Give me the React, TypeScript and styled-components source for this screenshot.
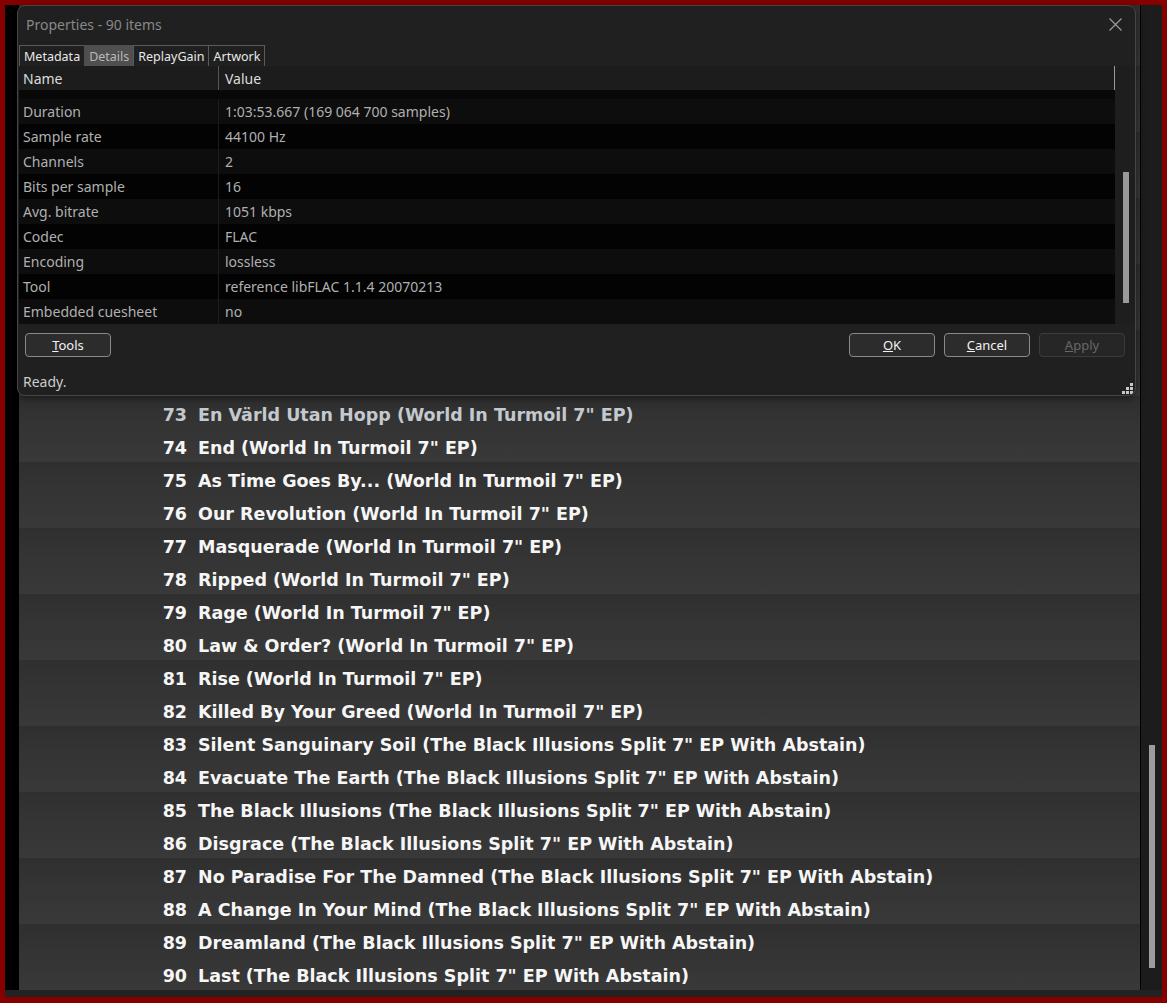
import React from "react";
import styled, { createGlobalStyle } from "styled-components";

const GlobalStyle = createGlobalStyle`
  html, body { margin: 0; padding: 0; height: 100%; overflow: hidden; background: #870000; }
  #root { height: 100%; }
  * { box-sizing: border-box; }
`;

const Frame = styled.div`
  position: relative;
  height: 100vh;
  padding: 5px 5px 6px 5px;
  background: #870000;
  display: flex;
`;

const Window = styled.div`
  flex: 1;
  display: flex;
  flex-direction: column;
  background: #1a1a1a;
  min-height: 0;
`;

const Body = styled.div`
  flex: 1;
  display: flex;
  min-height: 0;
`;

const LeftStrip = styled.div`
  width: 14px;
  background: #000;
`;

const TrackList = styled.div`
  flex: 1;
  display: flex;
  flex-direction: column;
  justify-content: flex-end;
  overflow: hidden;
  background: #303030;
`;

const TrackRow = styled.div<{ $alt: boolean; $dim?: boolean }>`
  flex: 0 0 33px;
  height: 33px;
  display: flex;
  align-items: center;
  padding-top: 5px;
  background: ${(p) =>
    p.$alt
      ? "linear-gradient(#343434, #393939)"
      : "linear-gradient(#2f2f2f, #353535)"};
  color: ${(p) => (p.$dim ? "#c4c9cf" : "#f6f6f6")};
  font-family: "DejaVu Sans", sans-serif;
  font-weight: bold;
  font-size: 17.5px;
  white-space: nowrap;
`;

const TrackNo = styled.span`
  width: 168px;
  text-align: right;
  flex: none;
`;

const TrackTitle = styled.span`
  margin-left: 11px;
`;

const MainScroll = styled.div`
  width: 22px;
  background: #1c1c1c;
  border-left: 1px solid #000;
  display: flex;
  flex-direction: column;
  justify-content: flex-end;
  padding: 0 0 22px 8px;
`;

const MainThumb = styled.div`
  width: 6px;
  height: 223px;
  background: #9c9c9c;
`;

const BottomStrip = styled.div`
  height: 7px;
  background: #222;
`;

/* ---------- Dialog ---------- */

const Dialog = styled.div`
  position: absolute;
  left: 17px;
  top: 5px;
  width: 1119px;
  height: 391px;
  border: 1px solid #454545;
  border-radius: 8px;
  background: #202020;
  display: flex;
  flex-direction: column;
  overflow: hidden;
  box-shadow: 0 2px 10px rgba(0, 0, 0, 0.5);
  font-family: "Noto Sans", "Open Sans", sans-serif;
`;

const TitleBar = styled.div`
  height: 39px;
  display: flex;
  align-items: center;
  padding: 0 0 3px 8px;
  flex: none;
`;

const Title = styled.div`
  flex: 1;
  color: #888888;
  font-size: 14px;
`;

const CloseButton = styled.div`
  width: 40px;
  height: 30px;
  display: flex;
  align-items: center;
  justify-content: center;
`;

const TabRow = styled.div`
  height: 21px;
  display: flex;
  padding-left: 1px;
  flex: none;
`;

const Tab = styled.div<{ $active?: boolean }>`
  height: 21px;
  padding: 0 4px;
  display: flex;
  align-items: center;
  font-size: 12.5px;
  border: 1px solid #5a5a5a;
  border-bottom: none;
  margin-right: -1px;
  background: ${(p) => (p.$active ? "#4f4f4f" : "#202020")};
  color: ${(p) => (p.$active ? "#b8b8b8" : "#e8e8e8")};
  border-color: ${(p) => (p.$active ? "#4f4f4f" : "#5a5a5a")};
`;

const ListArea = styled.div`
  height: 258px;
  margin-left: 1px;
  display: flex;
  flex: none;
`;

const ListMain = styled.div`
  flex: 1;
  display: flex;
  flex-direction: column;
  min-width: 0;
`;

const HeaderRow = styled.div`
  height: 24px;
  display: grid;
  grid-template-columns: 200px 1fr;
  background: #1c1c1c;
  border-right: 1px solid #9a9a9a;
  flex: none;
`;

const HeaderCell = styled.div<{ $first?: boolean }>`
  display: flex;
  align-items: center;
  padding-left: ${(p) => (p.$first ? "4px" : "6px")};
  color: #dcdcdc;
  font-size: 14px;
  border-right: ${(p) => (p.$first ? "1px solid #555" : "none")};
`;

const RowsArea = styled.div`
  flex: 1;
  display: flex;
  flex-direction: column;
  justify-content: flex-end;
  overflow: hidden;
  background: #080808;
`;

const PropRow = styled.div<{ $alt: boolean }>`
  height: 25px;
  flex: 0 0 25px;
  display: grid;
  grid-template-columns: 200px 1fr;
  background: ${(p) => (p.$alt ? "#030303" : "#0d0d0d")};
`;

const PropCell = styled.div<{ $first?: boolean }>`
  display: flex;
  align-items: center;
  padding-left: ${(p) => (p.$first ? "4px" : "6px")};
  color: #b0b0b0;
  font-size: 14px;
  white-space: nowrap;
  border-right: ${(p) => (p.$first ? "1px solid #1c1c1c" : "none")};
`;

const ListScroll = styled.div`
  width: 20px;
  background: #1e1e1e;
  padding: 106px 0 0 8px;
`;

const ListThumb = styled.div`
  width: 6px;
  height: 131px;
  background: #9a9a9a;
`;

const Footer = styled.div`
  flex: 1;
  display: flex;
  flex-direction: column;
`;

const ButtonRow = styled.div`
  display: flex;
  padding: 9px 10px 0 7px;
  gap: 9px;
`;

const Spacer = styled.div`
  flex: 1;
`;

const Button = styled.div<{ $disabled?: boolean }>`
  width: 86px;
  height: 24px;
  display: flex;
  align-items: center;
  justify-content: center;
  border-radius: 4px;
  font-size: 13px;
  border: 1px solid ${(p) => (p.$disabled ? "#3c3c3c" : "#8a8a8a")};
  background: ${(p) => (p.$disabled ? "#262626" : "#2c2c2c")};
  color: ${(p) => (p.$disabled ? "#686868" : "#f2f2f2")};
`;

const StatusRow = styled.div`
  flex: 1;
  display: flex;
  align-items: flex-end;
  justify-content: space-between;
  padding: 0 2px 1px 5px;
`;

const StatusText = styled.div`
  color: #cccccc;
  font-size: 14px;
  padding-bottom: 3px;
`;

const tracks: [number, string][] = [
  [73, "En Värld Utan Hopp (World In Turmoil 7\" EP)"],
  [74, "End (World In Turmoil 7\" EP)"],
  [75, "As Time Goes By... (World In Turmoil 7\" EP)"],
  [76, "Our Revolution (World In Turmoil 7\" EP)"],
  [77, "Masquerade (World In Turmoil 7\" EP)"],
  [78, "Ripped (World In Turmoil 7\" EP)"],
  [79, "Rage (World In Turmoil 7\" EP)"],
  [80, "Law & Order? (World In Turmoil 7\" EP)"],
  [81, "Rise (World In Turmoil 7\" EP)"],
  [82, "Killed By Your Greed (World In Turmoil 7\" EP)"],
  [83, "Silent Sanguinary Soil (The Black Illusions Split 7\" EP With Abstain)"],
  [84, "Evacuate The Earth (The Black Illusions Split 7\" EP With Abstain)"],
  [85, "The Black Illusions (The Black Illusions Split 7\" EP With Abstain)"],
  [86, "Disgrace (The Black Illusions Split 7\" EP With Abstain)"],
  [87, "No Paradise For The Damned (The Black Illusions Split 7\" EP With Abstain)"],
  [88, "A Change In Your Mind (The Black Illusions Split 7\" EP With Abstain)"],
  [89, "Dreamland (The Black Illusions Split 7\" EP With Abstain)"],
  [90, "Last (The Black Illusions Split 7\" EP With Abstain)"],
];

const props: [string, string][] = [
  ["Duration", "1:03:53.667 (169 064 700 samples)"],
  ["Sample rate", "44100 Hz"],
  ["Channels", "2"],
  ["Bits per sample", "16"],
  ["Avg. bitrate", "1051 kbps"],
  ["Codec", "FLAC"],
  ["Encoding", "lossless"],
  ["Tool", "reference libFLAC 1.1.4 20070213"],
  ["Embedded cuesheet", "no"],
];

const hiddenRows = Array.from({ length: 14 }, (_, i) => 59 + i);

export default function App() {
  return (
    <>
      <GlobalStyle />
      <Frame>
        <Window>
          <Body>
            <LeftStrip />
            <TrackList>
              {hiddenRows.map((n) => (
                <TrackRow key={n} $alt={n % 2 === 0} />
              ))}
              {tracks.map(([n, t]) => (
                <TrackRow key={n} $alt={n % 2 === 0} $dim={n === 73}>
                  <TrackNo>{n}</TrackNo>
                  <TrackTitle>{t}</TrackTitle>
                </TrackRow>
              ))}
            </TrackList>
            <MainScroll>
              <MainThumb />
            </MainScroll>
          </Body>
          <BottomStrip />
        </Window>

        <Dialog>
          <TitleBar>
            <Title>Properties - 90 items</Title>
            <CloseButton>
              <svg width="13" height="13" viewBox="0 0 13 13">
                <path d="M0.5 0.5 L12.5 12.5 M12.5 0.5 L0.5 12.5" stroke="#9a9a9a" strokeWidth="1.2" />
              </svg>
            </CloseButton>
          </TitleBar>
          <TabRow>
            <Tab>Metadata</Tab>
            <Tab $active>Details</Tab>
            <Tab>ReplayGain</Tab>
            <Tab>Artwork</Tab>
          </TabRow>
          <ListArea>
            <ListMain>
              <HeaderRow>
                <HeaderCell $first>Name</HeaderCell>
                <HeaderCell>Value</HeaderCell>
              </HeaderRow>
              <RowsArea>
                {props.map(([k, v], i) => (
                  <PropRow key={k} $alt={i % 2 === 1}>
                    <PropCell $first>{k}</PropCell>
                    <PropCell>{v}</PropCell>
                  </PropRow>
                ))}
              </RowsArea>
            </ListMain>
            <ListScroll>
              <ListThumb />
            </ListScroll>
          </ListArea>
          <Footer>
            <ButtonRow>
              <Button>
                <span><u>T</u>ools</span>
              </Button>
              <Spacer />
              <Button>
                <span><u>O</u>K</span>
              </Button>
              <Button>
                <span><u>C</u>ancel</span>
              </Button>
              <Button $disabled>
                <span><u>A</u>pply</span>
              </Button>
            </ButtonRow>
            <StatusRow>
              <StatusText>Ready.</StatusText>
              <svg width="11" height="11" viewBox="0 0 11 11">
                <rect x="8" y="0" width="3" height="3" fill="#c8c8c8" />
                <rect x="4" y="4" width="3" height="3" fill="#c8c8c8" />
                <rect x="8" y="4" width="3" height="3" fill="#c8c8c8" />
                <rect x="0" y="8" width="3" height="3" fill="#c8c8c8" />
                <rect x="4" y="8" width="3" height="3" fill="#c8c8c8" />
                <rect x="8" y="8" width="3" height="3" fill="#c8c8c8" />
              </svg>
            </StatusRow>
          </Footer>
        </Dialog>
      </Frame>
    </>
  );
}
